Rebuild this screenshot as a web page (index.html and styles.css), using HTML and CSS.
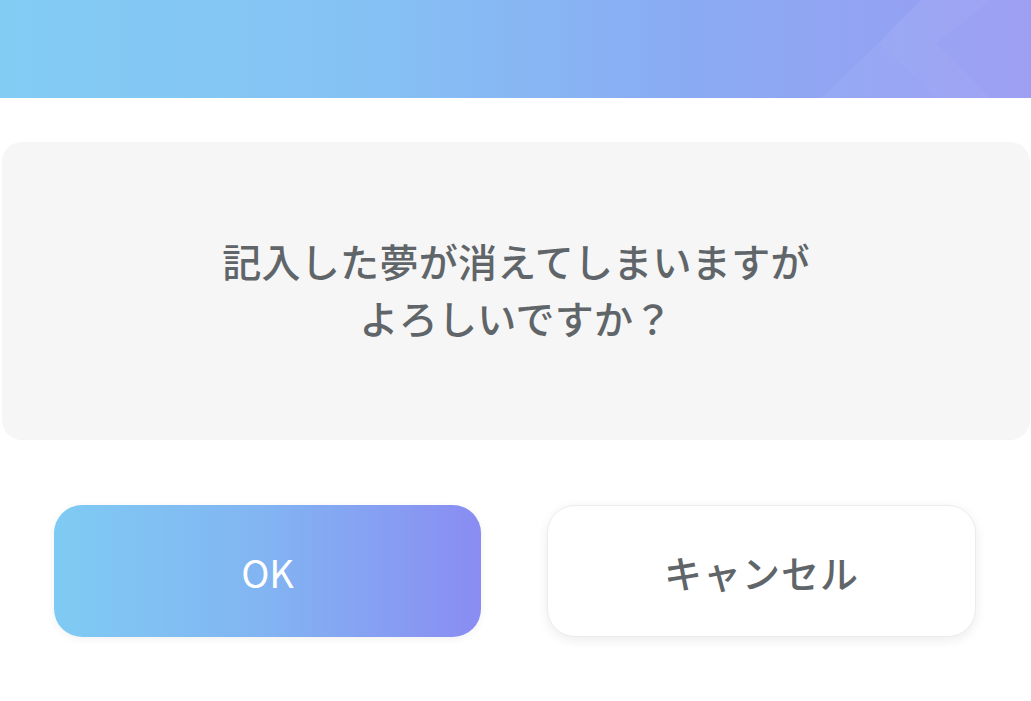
FILE: index.html
```html
<!DOCTYPE html>
<html>
  <head>
    <title>確認</title>
    <link rel="stylesheet" href="styles.css">
  </head>

  <body>
    <!-- Header band -->
    <header class="header">
      <svg class="header-pattern" width="260" height="98" viewBox="0 0 260 98">
        <polygon points="50,98 108,43 165,98" fill="#ffffff" fill-opacity="0.05"/>
        <polygon points="108,43 150,0 220,0 165,43 220,98 165,98" fill="#ffffff" fill-opacity="0.07"/>
        <polygon points="165,43 220,0 260,0 260,98 220,98" fill="#ffffff" fill-opacity="0.04"/>
      </svg>
    </header>

    <main class="dialog">
      <div class="message">
        <p>記入した夢が消えてしまいますが<br>よろしいですか？</p>
      </div>

      <div class="actions">
        <button class="btn btn-ok">OK</button>
        <button class="btn btn-cancel">キャンセル</button>
      </div>
    </main>
  </body>
</html>
```

FILE: styles.css
```css
* {
  margin: 0;
  padding: 0;
  box-sizing: border-box;
  font-family: 'Noto Sans CJK JP', 'Noto Sans', sans-serif;
}

body {
  background: #ffffff;
  width: 1031px;
  height: 701px;
  overflow: hidden;
}

.header {
  position: relative;
  height: 98px;
  background: linear-gradient(90deg, #82ccf4 0%, #85c2f4 35%, #89acf3 65%, #9a9cf3 100%);
  overflow: hidden;
}

.header-pattern {
  position: absolute;
  right: 0;
  top: 0;
}

.dialog {
  padding-top: 44px;
}

.message {
  margin: 0 1px 0 2px;
  height: 298px;
  background: #f6f6f6;
  border-radius: 20px;
  display: flex;
  align-items: center;
  justify-content: center;
}

.message p {
  color: #5f6568;
  font-size: 39px;
  font-weight: 500;
  line-height: 57px;
  text-align: center;
  letter-spacing: 0.3px;
  padding-bottom: 4px;
}

.actions {
  display: flex;
  gap: 66px;
  padding: 65px 55px 0 54px;
}

.btn {
  flex: 1;
  height: 132px;
  border-radius: 28px;
  font-size: 38px;
  font-weight: 500;
  cursor: pointer;
}

.btn-ok {
  border: none;
  color: #ffffff;
  font-weight: 400;
  background: linear-gradient(90deg, #7fcbf3 0%, #82b4f2 50%, #8a8cf2 100%);
  box-shadow: 0 2px 8px rgba(0, 0, 0, 0.06);
}

.btn-cancel {
  border: 1px solid #ececec;
  color: #5f6568;
  background: #ffffff;
  box-shadow: 0 3px 12px rgba(0, 0, 0, 0.08);
  letter-spacing: 1px;
}
```
